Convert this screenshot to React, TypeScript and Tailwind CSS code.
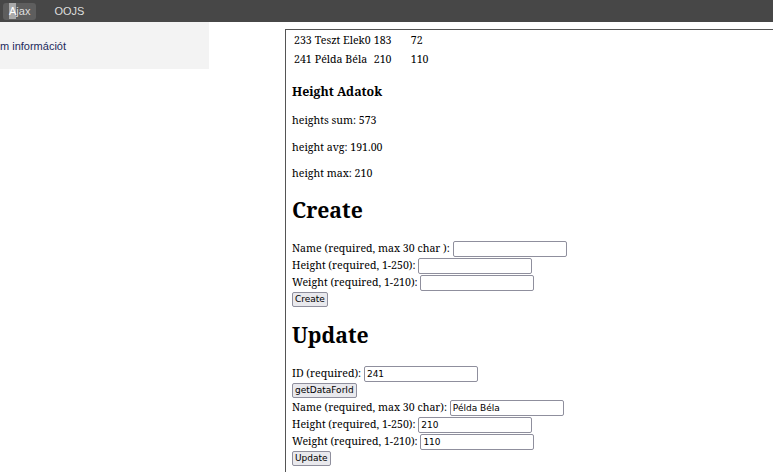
const rows = [
  { id: 233, name: "Teszt Elek0", height: 183, weight: 72 },
  { id: 241, name: "Példa Béla", height: 210, weight: 110 },
];

function Field({ label, value = "" }: { label: string; value?: string }) {
  return (
    <div className="flex h-[17px] items-center whitespace-pre">
      <span>{label} </span>
      <input
        readOnly
        value={value}
        className="h-[16px] w-[114px] rounded-[2px] border border-[#8f8f9d] bg-white px-[2px] font-['DejaVu_Sans',sans-serif] text-[9px] text-black outline-none"
      />
    </div>
  );
}

function Btn({ children }: { children: string }) {
  return (
    <div className="flex h-[17px] items-center">
      <button className="h-[15px] rounded-[2px] border border-[#8f8f9d] bg-[#e9e9ed] px-[2px] font-['DejaVu_Sans',sans-serif] text-[9px] leading-none text-black">
        {children}
      </button>
    </div>
  );
}

export default function App() {
  return (
    <div className="h-[472px] w-[773px] overflow-hidden bg-white">
      {/* Top bar */}
      <nav className="flex h-[22px] items-center gap-[18px] bg-[#474747] pl-[3px] font-['Liberation_Sans',Arial,sans-serif] text-[11px] text-[#dedede]">
        <span className="flex h-[17px] items-center rounded-[3px] bg-[#5e5e5e] px-[6px]">
          <span className="bg-[#a9a9a9] text-white">A</span>jax
        </span>
        <span>OOJS</span>
      </nav>

      <div className="flex">
        {/* Left panel */}
        <aside className="flex h-[47px] w-[209px] shrink-0 items-center bg-[#f3f3f3] pt-[2px] font-['Liberation_Sans',Arial,sans-serif] text-[11px] text-[#1c2a5c]">
          <span>m információt</span>
        </aside>

        {/* Main box */}
        <main className="ml-[76px] mt-[7px] h-[460px] w-[520px] shrink-0 border border-[#555] px-[6px] font-['Noto_Serif','DejaVu_Serif',serif] text-[10.6px] text-black">
          <table className="-ml-[1px] border-separate border-spacing-x-[3px] border-spacing-y-[2px] whitespace-nowrap">
            <tbody>
              {rows.map((r) => (
                <tr key={r.id}>
                  <td className="h-[17px] w-[17px] p-0 leading-[17px]">{r.id}</td>
                  <td className="h-[17px] w-[56px] p-0 leading-[17px]">{r.name}</td>
                  <td className="h-[17px] w-[34px] p-0 leading-[17px]">{r.height}</td>
                  <td className="h-[17px] p-0 leading-[17px]">{r.weight}</td>
                </tr>
              ))}
            </tbody>
          </table>

          <h3 className="mt-[13px] text-[12.4px] font-bold leading-[17px]">Height Adatok</h3>
          <p className="mt-[13px] leading-[14px]">heights sum: 573</p>
          <p className="mt-[12.5px] leading-[14px]">height avg: 191.00</p>
          <p className="mt-[12.5px] leading-[14px]">height max: 210</p>

          <h1 className="mt-[15px] text-[21.2px] font-bold leading-[30px]">Create</h1>
          <div className="mt-[15px]">
            <Field label="Name (required, max 30 char ):" />
            <Field label="Height (required, 1-250):" />
            <Field label="Weight (required, 1-210):" />
            <Btn>Create</Btn>
          </div>

          <h1 className="mt-[12px] text-[21.2px] font-bold leading-[30px]">Update</h1>
          <div className="mt-[15px]">
            <Field label="ID (required):" value="241" />
            <Btn>getDataForId</Btn>
            <Field label="Name (required, max 30 char):" value="Példa Béla" />
            <Field label="Height (required, 1-250):" value="210" />
            <Field label="Weight (required, 1-210):" value="110" />
            <Btn>Update</Btn>
          </div>
        </main>
      </div>
    </div>
  );
}
